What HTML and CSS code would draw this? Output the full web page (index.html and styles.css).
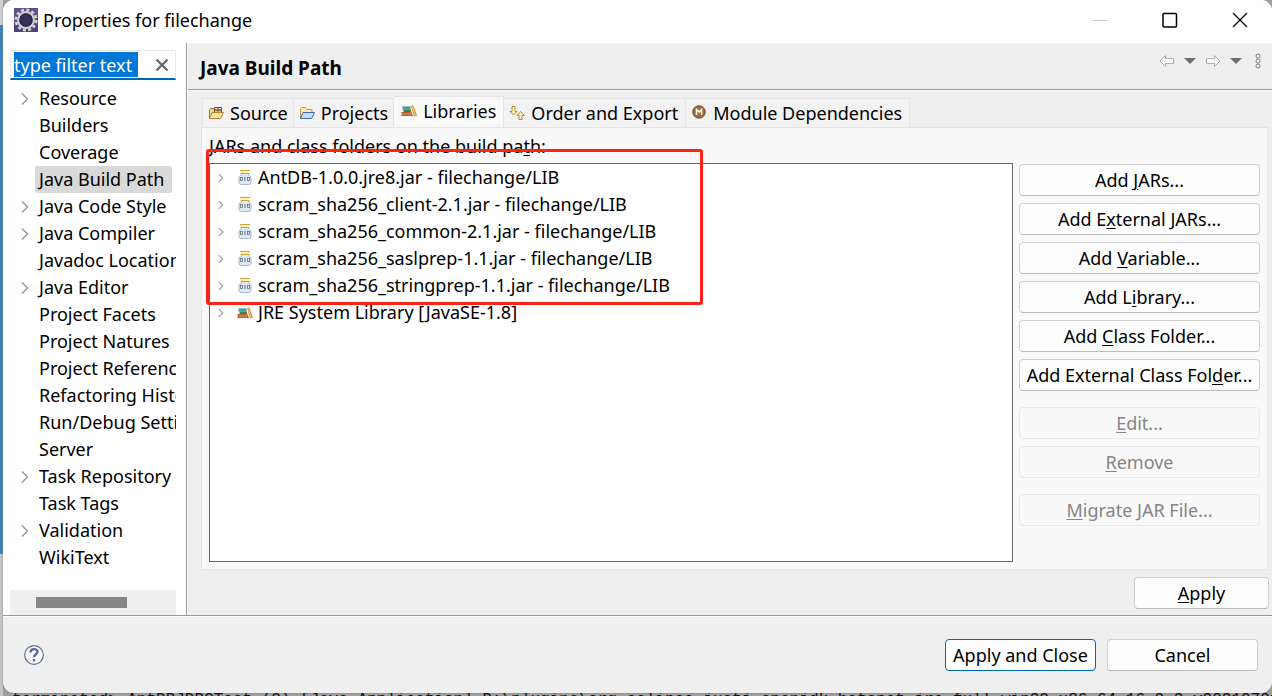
FILE: index.html
```html
<!DOCTYPE html>
<html lang="en">
<head>
<meta charset="utf-8">
<title>Properties for filechange</title>
<link rel="stylesheet" href="styles.css">
</head>
<body>
<svg class="defs" aria-hidden="true">
  <symbol id="chev" viewBox="0 0 10 14"><path d="M2 1.500l5.500 5.500L2 12.500" fill="none" stroke="#9a9a9a" stroke-width="1.500"/></symbol>
  <symbol id="jar" viewBox="0 0 16 16">
    <path d="M4.500 3.500h7v1.300c1.500.8 2.500 1.700 2.500 3V12c0 1.500-.8 2.500-2.300 2.500H4.300C2.800 14.500 2 13.500 2 12V7.800c0-1.300 1-2.200 2.500-3z" fill="#dde9f6" stroke="#a3b7ce"/>
    <path d="M3 .5h10M3.500 3.500h9" stroke="#cda43a"/><path d="M3.500 1.500h9M4 2.500h8" stroke="#fff0a8"/>
    <rect x="3.500" y="7.500" width="2" height="3" fill="none" stroke="#66717f" stroke-width=".8"/><path d="M8 7V11" stroke="#66717f"/><rect x="10.500" y="7.500" width="2" height="3" fill="none" stroke="#66717f" stroke-width=".8"/>
  </symbol>
  <symbol id="books" viewBox="0 0 16 16">
    <path d="M1 3.500H9.500v3H1l1-1.500z" fill="#258f8a"/><path d="M2.500 6.500H10V9H2.500z" fill="#4b7a4e"/><path d="M0 9h9.800v4H0l1.200-2z" fill="#b65d30"/>
    <path d="M2 11h7.500" stroke="#e49c60"/><path d="M2 5h7" stroke="#59b3a7"/><path d="M10 3l2.200-.8L16 12.500l-3 1z" fill="#dc8a24"/><path d="M11.300 3.500l3 9" stroke="#f7cf8a"/><path d="M10 8v5.300h2z" fill="#a3632c"/>
  </symbol>
</svg>
<div class="desktop">
<main class="window">
  <header class="titlebar">
    <svg class="app" viewBox="0 0 24 24"><rect width="24" height="24" fill="#51407a"/><path d="M0 0h24v9L0 15z" fill="#715b98" opacity=".5"/><circle cx="12" cy="12" r="10" fill="none" stroke="#cfd0d2" stroke-width="3" stroke-dasharray="3 2.230"/><circle cx="12" cy="12" r="7.800" fill="#35315a" stroke="#c9cacc" stroke-width="2.500"/><circle cx="12" cy="12" r="6" fill="none" stroke="#2a2740" stroke-width="1.500"/></svg>
    <h1>Properties for filechange</h1>
    <div class="winbtns">
      <button aria-label="Minimize" disabled><svg viewBox="0 0 16 16"><path d="M.5 8.500h15" stroke="#c7c7c7"/></svg></button>
      <button aria-label="Maximize"><svg viewBox="0 0 16 16"><rect x="1" y="1.500" width="13.500" height="13.500" rx="1" fill="none" stroke="#000" stroke-width="1.500"/></svg></button>
      <button aria-label="Close"><svg viewBox="0 0 16 16"><path d="M1 1l14 14M15 1L1 15" stroke="#000" stroke-width="1.300"/></svg></button>
    </div>
  </header>
  <div class="content">
    <nav class="side" aria-label="Property pages">
      <div class="filter"><input type="text" value="type filter text" aria-label="Filter"><button aria-label="Clear"><svg viewBox="0 0 14 14"><path d="M1.500 1.500l11 11M12.500 1.500l-11 11" stroke="#666" stroke-width="2.300"/></svg></button></div>
      <ul class="pages">
        <li><svg><use href="#chev"/></svg><a href="#">Resource</a></li>
        <li><a href="#">Builders</a></li>
        <li><a href="#">Coverage</a></li>
        <li><a href="#" class="current">Java Build Path</a></li>
        <li><svg><use href="#chev"/></svg><a href="#">Java Code Style</a></li>
        <li><svg><use href="#chev"/></svg><a href="#">Java Compiler</a></li>
        <li><a href="#">Javadoc Location</a></li>
        <li><svg><use href="#chev"/></svg><a href="#">Java Editor</a></li>
        <li><a href="#">Project Facets</a></li>
        <li><a href="#">Project Natures</a></li>
        <li><a href="#">Project References</a></li>
        <li><a href="#">Refactoring History</a></li>
        <li><a href="#">Run/Debug Settings</a></li>
        <li><a href="#">Server</a></li>
        <li><svg><use href="#chev"/></svg><a href="#">Task Repository</a></li>
        <li><a href="#">Task Tags</a></li>
        <li><svg><use href="#chev"/></svg><a href="#">Validation</a></li>
        <li><a href="#">WikiText</a></li>
      </ul>
      <div class="scroll"><div class="thumb"></div></div>
    </nav>
    <section class="page">
      <div class="pagehead">
        <h2>Java Build Path</h2>
        <div class="history">
          <button aria-label="Back"><svg width="16" height="14" viewBox="0 0 16 14"><path d="M1 7l5.500-5.500v3H14.500v5H6.500v3z" fill="#fafafa" stroke="#b0b0b0"/></svg></button>
          <button aria-label="Back history"><svg width="12" height="14" viewBox="0 0 12 14"><path d="M0 4h12L6 10z" fill="#6e6e72"/></svg></button>
          <button aria-label="Forward"><svg width="16" height="14" viewBox="0 0 16 14"><path d="M15 7L9.500 1.500v3H1.500v5h8v3z" fill="#fafafa" stroke="#b0b0b0"/></svg></button>
          <button aria-label="Forward history"><svg width="12" height="14" viewBox="0 0 12 14"><path d="M0 4h12L6 10z" fill="#6e6e72"/></svg></button>
          <button aria-label="Menu"><svg width="6" height="16" viewBox="0 0 6 16"><g fill="#fff" stroke="#777"><circle cx="3" cy="3" r="2"/><circle cx="3" cy="8" r="2"/><circle cx="3" cy="13" r="2"/></g></svg></button>
        </div>
      </div>
      <div class="tabs" role="tablist">
        <button role="tab"><svg viewBox="0 0 16 16"><path d="M1.500 13V5l1-1.500h4L8 5h5v2" fill="#f2d28f" stroke="#b9802f"/><path d="M6.500 2.500h7v5h-7zM6 5h8M10 2v6" fill="none" stroke="#704a38"/><path d="M1.500 13.500L4 7.500h11.500l-3 6z" fill="#fbe3a6" stroke="#b9802f"/></svg>Source</button>
        <button role="tab"><svg viewBox="0 0 16 16"><path d="M1.500 13V3.500l1-1h4L8 4.500h5V7" fill="#fae9b3" stroke="#c19a45"/><path d="M1.500 13.500L4 7.500h11.500l-3 6z" fill="#c5dcf8" stroke="#4268ae"/></svg>Projects</button>
        <button role="tab" aria-selected="true" class="active"><svg><use href="#books"/></svg>Libraries</button>
        <button role="tab"><svg viewBox="0 0 16 16"><path d="M3 1.500h3v5h2L4.500 10 1 6.500h2z" fill="#fff2bf" stroke="#b98a2e"/><path d="M10 14.500h3v-4h2.300L11.500 6.500 8 10.500h2z" fill="#fff2bf" stroke="#b98a2e"/></svg>Order and Export</button>
        <button role="tab"><svg viewBox="0 0 16 16"><circle cx="8" cy="7" r="6.200" fill="#a06c35" stroke="#744719"/><path d="M5.500 10V4.500L8 7l2.500-2.500V10" fill="none" stroke="#fff" stroke-width="1.500"/></svg>Module Dependencies</button>
      </div>
      <div class="panel">
        <p class="caption">JARs and class folders on the build pa<u>t</u>h:</p>
        <div class="cols">
          <div class="listbox">
            <ul class="entries">
              <li><svg class="tw"><use href="#chev"/></svg><svg class="ic"><use href="#jar"/></svg>AntDB-1.0.0.jre8.jar - filechange/LIB</li>
              <li><svg class="tw"><use href="#chev"/></svg><svg class="ic"><use href="#jar"/></svg>scram_sha256_client-2.1.jar - filechange/LIB</li>
              <li><svg class="tw"><use href="#chev"/></svg><svg class="ic"><use href="#jar"/></svg>scram_sha256_common-2.1.jar - filechange/LIB</li>
              <li><svg class="tw"><use href="#chev"/></svg><svg class="ic"><use href="#jar"/></svg>scram_sha256_saslprep-1.1.jar - filechange/LIB</li>
              <li><svg class="tw"><use href="#chev"/></svg><svg class="ic"><use href="#jar"/></svg>scram_sha256_stringprep-1.1.jar - filechange/LIB</li>
              <li><svg class="tw"><use href="#chev"/></svg><svg class="ic"><use href="#books"/></svg>JRE System Library [JavaSE-1.8]</li>
            </ul>
            <div class="mark"></div>
          </div>
          <div class="actions">
            <button class="btn">Add <u>J</u>ARs...</button>
            <button class="btn">Add E<u>x</u>ternal JARs...</button>
            <button class="btn">Add <u>V</u>ariable...</button>
            <button class="btn">Add L<u>i</u>brary...</button>
            <button class="btn">Add <u>C</u>lass Folder...</button>
            <button class="btn">Add External Class Fol<u>d</u>er...</button>
            <button class="btn gap" disabled><u>E</u>dit...</button>
            <button class="btn" disabled><u>R</u>emove</button>
            <button class="btn gap" disabled><u>M</u>igrate JAR File...</button>
          </div>
        </div>
      </div>
      <div class="applyrow"><button class="btn apply"><u>A</u>pply</button></div>
    </section>
  </div>
  <footer class="footer">
    <button class="help" aria-label="Help"><svg viewBox="0 0 20 20"><circle cx="10" cy="10" r="9.300" fill="#f8f8fb" stroke="#5c6c91" stroke-width="1.200"/><path d="M6.500 7.500C6.500 3 13.800 3.300 13.500 7c-.2 2.400-3.500 2.200-3.500 5.200M10 14v2.500" fill="none" stroke="#5c6c91" stroke-width="2.400"/></svg></button>
    <button class="btn wide primary">Apply and Close</button>
    <button class="btn wide">Cancel</button>
  </footer>
</main>
<div class="console">terminated&gt; AntDBJDBCTest (2) [Java Application] D:\plugins\org.eclipse.justj.openjdk.hotspot.jre.full.win32.x86_64_16.0.2.v20210721-1</div>
</div>
</body>
</html>
```
FILE: styles.css
```css
* { box-sizing: border-box; }
body { margin: 0; font: 18px/27px "Noto Sans", "Open Sans", sans-serif; color: #000; }
button, input { font: inherit; color: inherit; }
ul { list-style: none; margin: 0; padding: 0; }
a { color: inherit; text-decoration: none; }
svg { display: block; flex: none; }
u { text-underline-offset: 2px; text-decoration-thickness: 1px; }
.defs { position: absolute; width: 0; height: 0; }
.desktop { height: 100vh; display: flex; flex-direction: column; overflow: hidden; padding-left: 3px; background: linear-gradient(#d0d0d0 0 25px, #3d84bd 25px 554px, #c4c4c4 554px) 0 0 / 3px 100% no-repeat #a0a0a0; }
.window { flex: 1; min-height: 0; display: flex; flex-direction: column; overflow: hidden; border-radius: 11px; background: #efefef; box-shadow: 0 0 2px #777; }
.console { flex: none; height: 3px; overflow: hidden; white-space: nowrap; padding-left: 9px; font: 16px/14px "Liberation Mono", monospace; color: #111; }
.titlebar { height: 43px; flex: none; display: flex; align-items: center; background: #fff; padding: 0 24px 3px 11px; }
.app { width: 24px; height: 24px; margin-right: 5px; }
h1 { margin: 0; font-size: 18px; font-weight: 400; flex: 1; }
.winbtns { display: flex; gap: 54px; }
.winbtns button, .history button, .filter button, .help { border: 0; background: none; padding: 0; }
.winbtns svg { width: 16px; height: 16px; }
.content { flex: 1; min-height: 0; display: flex; border-bottom: 1px solid #999; }
.side { width: 184px; flex: none; background: #fff; border-right: 1px solid #999; padding: 7px 10px 0 7px; display: flex; flex-direction: column; }
.filter { display: flex; align-items: center; height: 30px; border: 1px solid #e8e8e8; border-bottom: 2px solid #0067b8; padding: 0 6px 0 3px; justify-content: space-between; }
.filter input { width: 124px; height: 25px; border: 0; padding: 1px 0 0; background: #0078d7; color: #fff; }
.filter svg { width: 14px; height: 14px; }
.pages { padding-top: 5px; flex: 1; overflow: hidden; white-space: nowrap; }
.pages li { height: 27px; display: flex; align-items: center; padding-left: 25px; }
.pages li svg { width: 10px; height: 14px; margin-left: -15px; margin-right: 5px; }
.pages a { padding: 0 4px; border-radius: 2px; }
.pages .current { background: #d9d9d9; padding-right: 8px; }
.scroll { height: 25px; flex: none; background: #efefef; padding: 7px 26px; }
.thumb { width: 91px; height: 11px; background: #868686; }
.page { flex: 1; min-width: 0; display: flex; flex-direction: column; border-left: 1px solid #fff; }
.pagehead { flex: none; height: 47px; display: flex; justify-content: space-between; border-bottom: 1px solid #999; box-shadow: 0 1px #fff; padding: 12px 11px 0 12px; }
h2 { margin: 0; font-size: 19px; font-weight: 700; }
.history { display: flex; align-items: center; height: 12px; gap: 9px; }
.history button:last-child { margin-left: 4px; }
.tabs { display: flex; align-items: flex-end; height: 37px; flex: none; padding-left: 14px; }
.tabs button { display: flex; align-items: center; gap: 6px; height: 29px; border: 1px solid #e4e4e4; border-bottom: 0; border-left-width: 0; background: #f2f2f2; padding: 0 5px; white-space: nowrap; }
.tabs button:first-child { border-left-width: 1px; }
.tabs button:nth-child(n+4) { padding-right: 7px; }
.tabs svg { width: 16px; height: 16px; }
.tabs .active { height: 31px; background: #f9f9f9; padding: 0 7px 2px; }
.panel { flex: 1; min-height: 0; margin: 0 4px 0 13px; border: 1px solid #e4e4e4; background: #f9f9f9; padding: 5px 7px 7px; display: flex; flex-direction: column; }
.caption { margin: 0; height: 30px; }
.cols { flex: 1; min-height: 0; display: flex; gap: 6px; }
.listbox { flex: 1; min-width: 0; border: 1px solid #666; background: #fff; position: relative; }
.entries li { display: flex; align-items: center; height: 27px; padding-left: 7px; white-space: nowrap; }
.tw { width: 8px; height: 10px; margin-right: 12px; }
.ic { width: 16px; height: 16px; margin-right: 5px; }
.mark { position: absolute; left: -4px; top: -15px; width: 497px; height: 156px; border: 3px solid #ff2116; border-radius: 3px; }
.actions { width: 241px; flex: none; display: flex; flex-direction: column; gap: 7px; padding-top: 1px; }
.btn { height: 32px; flex: none; border: 1px solid #d0d0d0; border-bottom-color: #bbb; border-radius: 4px; background: #fdfdfd; padding: 0; white-space: nowrap; }
.btn:disabled { color: #858585; background: #f9f9f9; border-color: #e8e8e8; }
.gap { margin-top: 9px; }
.applyrow { flex: none; display: flex; justify-content: flex-end; padding: 7px 3px 6px; }
.apply { width: 135px; }
.footer { flex: none; height: 77px; display: flex; align-items: center; gap: 11px; border-top: 1px solid #fff; padding: 0 14px 0 21px; }
.help { margin-right: auto; }
.help svg { width: 20px; height: 20px; }
.wide { width: 151px; }
.primary { border-color: #0067c0; }
```
